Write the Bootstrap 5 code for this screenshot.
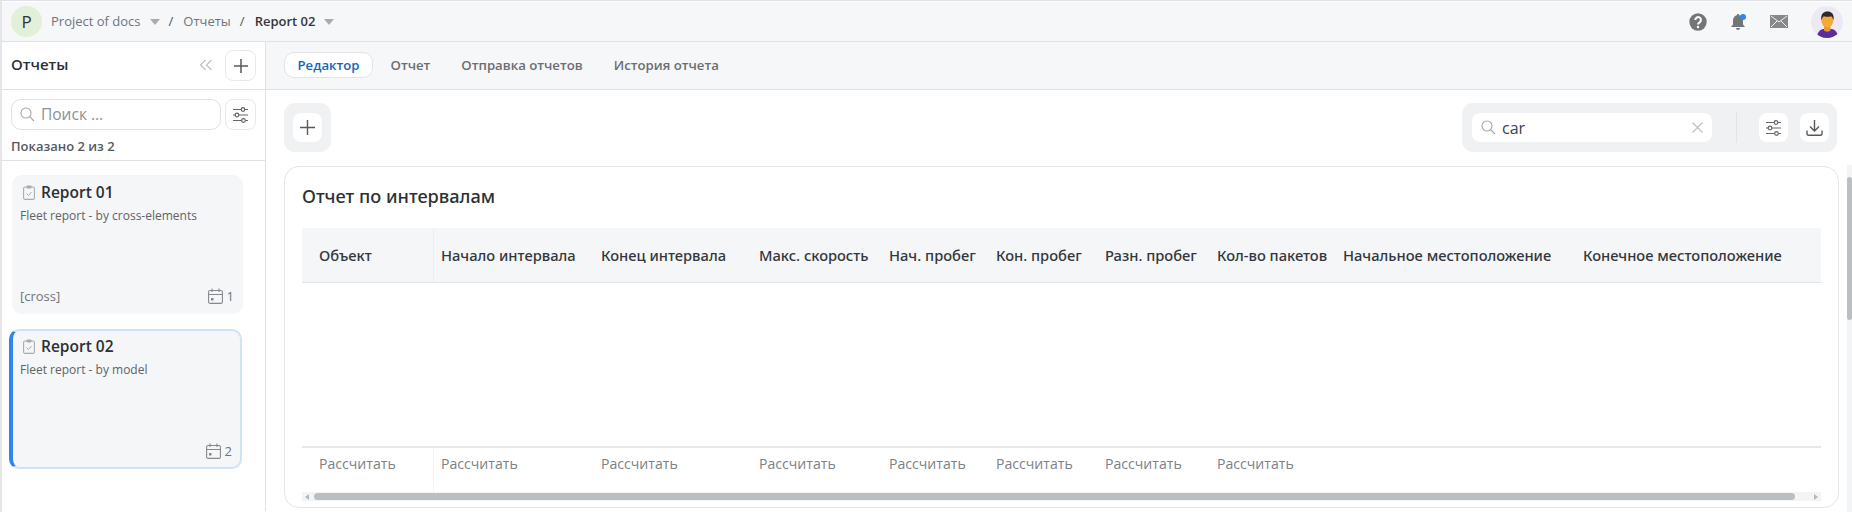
<!DOCTYPE html>
<html lang="ru">
<head>
    <meta charset="utf-8">
    <title>Report 02</title>
    <link href="https://cdn.jsdelivr.net/npm/bootstrap@5.3.3/dist/css/bootstrap.min.css" rel="stylesheet">
    <style>
        html, body { height: 100%; overflow: hidden; }
        body {
            font-family: "Open Sans", "Noto Sans", sans-serif;
            font-size: 13px;
            color: #2b2f36;
            background: #fff;
            border-top: 1px solid #dfe1e4;
            border-left: 2px solid #e4e6e8;
            padding-top: 1px;
        }
        .topbar { height: 40px; background: #f6f7f9; border-bottom: 1px solid #dfe1e4; padding: 0 9px; }
        .logo { width: 31px; height: 31px; background: #e2f0d9; font-size: 17px; color: #333; margin-right: 9px; }
        .crumb { color: #6f7479; }
        .crumb-sep { color: #4e5256; margin: 0 10px 0 9px; }
        .crumb-current { color: #33373c; font-weight: 600; }
        .caret { width: 0; height: 0; border-left: 5px solid transparent; border-right: 5px solid transparent; border-top: 6px solid #a9acaf; margin-left: 9px; }
        .top-icons { gap: 23px; }
        .avatar { width: 32px; height: 32px; background: #ece8f4; overflow: hidden; }

        .app { height: 469px; }
        .sidebar { width: 264px; flex: none; border-right: 1px solid #dfe1e4; }
        .side-head { height: 48px; padding: 0 9px 2px; border-bottom: 1px solid #dfe1e4; }
        .side-head .icon-btn { margin-top: 2px; }
        .side-title { font-size: 15px; font-weight: 600; }
        .icon-btn { width: 31px; height: 31px; padding: 0; background: #fff; border: 1px solid #e6e8ea; border-radius: 8px; flex: none; }
        .side-search { padding: 9px 9px 0; }
        .search-box { height: 31px; border: 1px solid #dfe1e4; border-radius: 10px; padding: 0 8px; color: #8c9095; font-size: 15.500px; gap: 6px; }
        .shown { font-size: 13px; font-weight: 600; color: #55595e; padding: 8px 9px 5px; border-bottom: 1px solid #dfe1e4; line-height: 17px; }
        .report-list { padding: 14px 22px 0 10px; }
        .report { height: 139px; background: #f5f6f8; border-radius: 10px; padding: 7px 9px 8px 8px; margin-bottom: 15px; }
        .report.active { border: 2px solid #cfe2f8; border-left: 4px solid #2f86ee; margin-left: -3px; margin-right: 1px; padding: 5px 8px 6px 7px; height: 140px; }
        .report-name { font-size: 15.500px; font-weight: 600; line-height: 20px; gap: 6px; }
        .report-name svg { margin-left: 3px; }
        .report-desc { font-size: 12px; color: #5e6368; line-height: 18px; margin-top: 5px; }
        .report-foot { font-size: 13px; color: #6f7479; }

        .content { min-width: 0; }
        .tabs-bar { height: 48px; background: #f6f7f9; border-bottom: 1px solid #dfe1e4; padding: 0 18px 1px; }
        .tabs-bar .nav-link { font-size: 13.200px; font-weight: 600; color: #6a6e73; padding: 3px 12.500px; border-radius: 10px; border: 1px solid transparent; line-height: 18px; margin-right: 4px; }
        .tabs-bar .nav-link.active { color: #1565b8; background: #fff; border-color: #e2e4e7; }
        .main { min-width: 0; padding: 0 5px 0 18px; position: relative; }
        .toolbar { padding-top: 13px; height: 76px; }
        .tool-group { background: #f0f1f2; border-radius: 11px; height: 49px; padding: 0 9px; }
        .tool-group.right { padding: 0 8px 0 10px; margin-right: 10px; }
        .tool-group .icon-btn { width: 29px; height: 29px; border: 0; }
        .tool-search { width: 240px; height: 29px; background: #fff; border-radius: 8px; padding: 0 9px; font-size: 16px; color: #3a3f52; gap: 6px; }
        .tool-sep { width: 1px; height: 31px; background: #e3e4e6; margin: 0 22px 0 24px; }
        .panel { width: 1555px; height: 342px; border: 1px solid #e3e5e7; border-radius: 15px; padding: 15px 17px 0; }
        .panel-title { font-family: "Noto Sans", sans-serif; font-size: 18.200px; font-weight: 500; line-height: 28px; margin-bottom: 18px; color: #2b2f36; }
        .report-table { width: 1519px; table-layout: fixed; margin: 0; }
        .report-table th { height: 54px; background: #f5f6f8; font-family: "Noto Sans", sans-serif; font-size: 14.700px; font-weight: 500; color: #33373c; padding: 0 0 0 7px; vertical-align: middle; border-bottom: 1px solid #e1e3e5; white-space: nowrap; }
        .report-table td { border: 0; padding: 0; height: 165px; }
        .report-table tfoot td { height: 45px; border-top: 2px solid #e6e7e9; font-size: 14.100px; color: #7d8185; padding: 0 0 12px 7px; vertical-align: middle; }
        .report-table th.first { padding-left: 17px; box-shadow: inset -1px 0 0 #eceef0; }
        .report-table tfoot td.first { padding-left: 17px; box-shadow: inset -1px 0 0 #f2f3f4; }
        .w1 { width: 132px; } .w2 { width: 160px; } .w3 { width: 158px; } .w4 { width: 130px; } .w5 { width: 107px; }
        .w6 { width: 109px; } .w7 { width: 112px; } .w8 { width: 126px; } .w9 { width: 240px; } .w10 { width: 245px; }
        .hscroll { width: 1519px; height: 9px; background: #f3f4f5; padding: 1px 26px 1px 12px; position: relative; }
        .hscroll .thumb { height: 100%; background: #bcbfc2; border-radius: 4px; }
        .arrow-l, .arrow-r { position: absolute; top: 2px; width: 0; height: 0; border-top: 3px solid transparent; border-bottom: 3px solid transparent; }
        .arrow-l { left: 3px; border-right: 4px solid #b4b7ba; }
        .arrow-r { right: 3px; border-left: 4px solid #b4b7ba; }
        .vscroll { position: absolute; top: 75px; right: 0; width: 5px; height: 347px; background: #f3f4f5; }
        .vscroll .thumb { margin-top: 12px; height: 143px; background: #bcbfc2; border-radius: 3px; }
    </style>
</head>
<body>

<!-- Верхняя панель -->
<header class="topbar d-flex align-items-center justify-content-between">
    <div class="d-flex align-items-center">
        <div class="logo rounded-circle d-flex align-items-center justify-content-center">P</div>
        <span class="crumb">Project of docs</span><span class="caret"></span>
        <span class="crumb-sep">/</span><span class="crumb">Отчеты</span>
        <span class="crumb-sep">/</span><span class="crumb-current">Report 02</span><span class="caret"></span>
    </div>
    <div class="top-icons d-flex align-items-center">
        <svg width="18" height="18" viewBox="0 0 18 18"><circle cx="9" cy="9" r="8.700" fill="#727679"/><path d="M6.300 7a2.800 2.800 0 1 1 4.300 2.300C9.500 10 9 10.400 9 11.400" fill="none" stroke="#fff" stroke-width="2"/><circle cx="9" cy="14" r="1.200" fill="#fff"/></svg>
        <svg width="17" height="18" viewBox="0 0 17 18"><path d="M8 1a1.200 1.200 0 0 1 1.200 1.300C12 3 13 5.400 13 8v3.500l2 2.500H1l2-2.500V8c0-2.600 1-5 3.800-5.700A1.200 1.200 0 0 1 8 1zM6 15h4a2 2 0 0 1-4 0z" fill="#727679"/><circle cx="13" cy="4" r="3" fill="#2f86ee"/></svg>
        <svg width="18" height="13" viewBox="0 0 18 13"><rect width="18" height="13" fill="#85898c"/><path d="M1 1l8 6 8-6M1 12l6-6M17 12l-6-6" fill="none" stroke="#eef0f1" stroke-width="1"/></svg>
        <div class="avatar rounded-circle">
            <svg width="32" height="32" viewBox="0 0 32 32"><path d="M6 32c0-5.500 3-8.500 6.500-9h8c3.500.5 6.500 3.500 6.500 9z" fill="#5b2ca0"/><path d="M13 19h6.500v5.500c-1.500 1.500-5 1.500-6.500 0z" fill="#e8962e"/><ellipse cx="16.300" cy="14.500" rx="6" ry="7.200" fill="#f5a83c"/><path d="M10.300 14.500C9.500 8 12.500 5.500 16.500 5.500s7 2.500 6 9c-.5-2.500-1.500-3.800-2.500-4.300-2 .8-5 .8-7 0-1 .5-2.200 1.800-2.700 4.300z" fill="#2c2a2a"/></svg>
        </div>
    </div>
</header>

<div class="app d-flex">
    <!-- Боковая панель -->
    <aside class="sidebar">
        <div class="side-head d-flex align-items-center justify-content-between">
            <span class="side-title">Отчеты</span>
            <div class="d-flex align-items-center gap-2">
                <svg width="14" height="12" viewBox="0 0 14 12" class="me-1"><path d="M6.500 1L1.500 6l5 5M12.500 1l-5 5 5 5" fill="none" stroke="#c2c4c7" stroke-width="1.300"/></svg>
                <button class="icon-btn d-flex align-items-center justify-content-center"><svg width="16" height="16" viewBox="0 0 16 16"><path d="M8 1v14M1 8h14" stroke="#55595e" stroke-width="1.500"/></svg></button>
            </div>
        </div>
        <div class="side-search d-flex gap-1">
            <div class="search-box flex-grow-1 d-flex align-items-center">
                <svg width="15" height="15" viewBox="0 0 15 15"><circle cx="6" cy="6" r="5" fill="none" stroke="#a4a7aa" stroke-width="1.100"/><path d="M9.700 9.700L14 14" stroke="#a4a7aa" stroke-width="1.100"/></svg>
                <span>Поиск ...</span>
            </div>
            <button class="icon-btn d-flex align-items-center justify-content-center">
                <svg width="17" height="16" viewBox="0 0 17 16"><g fill="#fff" stroke="#63676b" stroke-width="1.200"><path d="M1 2.500h15M1 8h15M1 13.500h15"/><circle cx="11" cy="2.500" r="1.800"/><circle cx="5" cy="8" r="1.800"/><circle cx="11.500" cy="13.500" r="1.800"/></g></svg>
            </button>
        </div>
        <div class="shown">Показано 2 из 2</div>
        <div class="report-list">
            <div class="report d-flex flex-column">
                <div class="report-name d-flex align-items-center">
                    <svg width="12" height="15" viewBox="0 0 12 15"><rect x=".6" y="2" width="10.800" height="12.400" rx="1.500" fill="none" stroke="#a9acaf" stroke-width="1.100"/><rect x="3.500" y=".6" width="5" height="2.800" rx="1" fill="#a9acaf"/><path d="M3.500 8.500l2 2 3-3.500" fill="none" stroke="#a9acaf"/></svg>
                    Report 01
                </div>
                <div class="report-desc">Fleet report - by cross-elements</div>
                <div class="report-foot mt-auto d-flex align-items-center justify-content-between">
                    <span>[cross]</span>
                    <span class="d-flex align-items-center gap-1">
                        <svg width="15" height="16" viewBox="0 0 15 16"><rect x=".6" y="2.500" width="13.800" height="12.900" rx="1.500" fill="none" stroke="#85898c" stroke-width="1.100"/><path d="M.6 6.500h13.800M4 .5v3.500M11 .5v3.500" stroke="#85898c" stroke-width="1.100"/><rect x="3" y="10" width="2.500" height="2.500" fill="#85898c"/></svg>
                        1
                    </span>
                </div>
            </div>
            <div class="report active d-flex flex-column">
                <div class="report-name d-flex align-items-center">
                    <svg width="12" height="15" viewBox="0 0 12 15"><rect x=".6" y="2" width="10.800" height="12.400" rx="1.500" fill="none" stroke="#a9acaf" stroke-width="1.100"/><rect x="3.500" y=".6" width="5" height="2.800" rx="1" fill="#a9acaf"/><path d="M3.500 8.500l2 2 3-3.500" fill="none" stroke="#a9acaf"/></svg>
                    Report 02
                </div>
                <div class="report-desc">Fleet report - by model</div>
                <div class="report-foot mt-auto d-flex align-items-center justify-content-end">
                    <span class="d-flex align-items-center gap-1">
                        <svg width="15" height="16" viewBox="0 0 15 16"><rect x=".6" y="2.500" width="13.800" height="12.900" rx="1.500" fill="none" stroke="#85898c" stroke-width="1.100"/><path d="M.6 6.500h13.800M4 .5v3.500M11 .5v3.500" stroke="#85898c" stroke-width="1.100"/><rect x="3" y="10" width="2.500" height="2.500" fill="#85898c"/></svg>
                        2
                    </span>
                </div>
            </div>
        </div>
    </aside>

    <div class="content flex-grow-1">
        <!-- Вкладки -->
        <nav class="tabs-bar nav d-flex align-items-center">
            <a class="nav-link active" href="#">Редактор</a>
            <a class="nav-link" href="#">Отчет</a>
            <a class="nav-link" href="#">Отправка отчетов</a>
            <a class="nav-link" href="#">История отчета</a>
        </nav>

        <main class="main">
            <div class="toolbar d-flex justify-content-between align-items-start">
                <div class="tool-group d-flex align-items-center">
                    <button class="icon-btn d-flex align-items-center justify-content-center"><svg width="15" height="15" viewBox="0 0 15 15"><path d="M7.500 0v15M0 7.500h15" stroke="#55595e" stroke-width="1.400"/></svg></button>
                </div>
                <div class="tool-group right d-flex align-items-center">
                    <div class="tool-search d-flex align-items-center">
                        <svg width="15" height="15" viewBox="0 0 15 15"><circle cx="6" cy="6" r="5" fill="none" stroke="#a4a7aa" stroke-width="1.100"/><path d="M9.700 9.700L14 14" stroke="#a4a7aa" stroke-width="1.100"/></svg>
                        <span class="flex-grow-1">car</span>
                        <svg width="11" height="11" viewBox="0 0 11 11"><path d="M.5.5l10 10M10.500.5l-10 10" stroke="#bcbfc2" stroke-width="1.200"/></svg>
                    </div>
                    <div class="tool-sep"></div>
                    <button class="icon-btn d-flex align-items-center justify-content-center me-2">
                        <svg width="17" height="16" viewBox="0 0 17 16"><g fill="#fff" stroke="#63676b" stroke-width="1.200"><path d="M1 2.500h15M1 8h15M1 13.500h15"/><circle cx="11" cy="2.500" r="1.800"/><circle cx="5" cy="8" r="1.800"/><circle cx="11.500" cy="13.500" r="1.800"/></g></svg>
                    </button>
                    <button class="icon-btn d-flex align-items-center justify-content-center ms-1">
                        <svg width="17" height="17" viewBox="0 0 17 17"><path d="M8.500 1v11M4 7.500l4.500 4.500L13 7.500M1 11.500v3.200a1.500 1.500 0 0 0 1.500 1.500h12a1.500 1.500 0 0 0 1.500-1.500v-3.200" fill="none" stroke="#55595e" stroke-width="1.400"/></svg>
                    </button>
                </div>
            </div>

            <section class="panel">
                <div class="panel-title">Отчет по интервалам</div>
                <table class="table report-table">
                    <thead>
                    <tr>
                        <th class="first w1">Объект</th>
                        <th class="w2">Начало интервала</th>
                        <th class="w3">Конец интервала</th>
                        <th class="w4">Макс. скорость</th>
                        <th class="w5">Нач. пробег</th>
                        <th class="w6">Кон. пробег</th>
                        <th class="w7">Разн. пробег</th>
                        <th class="w8">Кол-во пакетов</th>
                        <th class="w9">Начальное местоположение</th>
                        <th class="w10">Конечное местоположение</th>
                    </tr>
                    </thead>
                    <tbody>
                    <tr><td colspan="10"></td></tr>
                    </tbody>
                    <tfoot>
                    <tr>
                        <td class="first">Рассчитать</td>
                        <td>Рассчитать</td>
                        <td>Рассчитать</td>
                        <td>Рассчитать</td>
                        <td>Рассчитать</td>
                        <td>Рассчитать</td>
                        <td>Рассчитать</td>
                        <td>Рассчитать</td>
                        <td></td>
                        <td></td>
                    </tr>
                    </tfoot>
                </table>
                <div class="hscroll"><span class="arrow-l"></span><div class="thumb"></div><span class="arrow-r"></span></div>
            </section>
            <div class="vscroll"><div class="thumb"></div></div>
        </main>
    </div>
</div>

<script src="https://cdn.jsdelivr.net/npm/bootstrap@5.3.3/dist/js/bootstrap.bundle.min.js"></script>
</body>
</html>
